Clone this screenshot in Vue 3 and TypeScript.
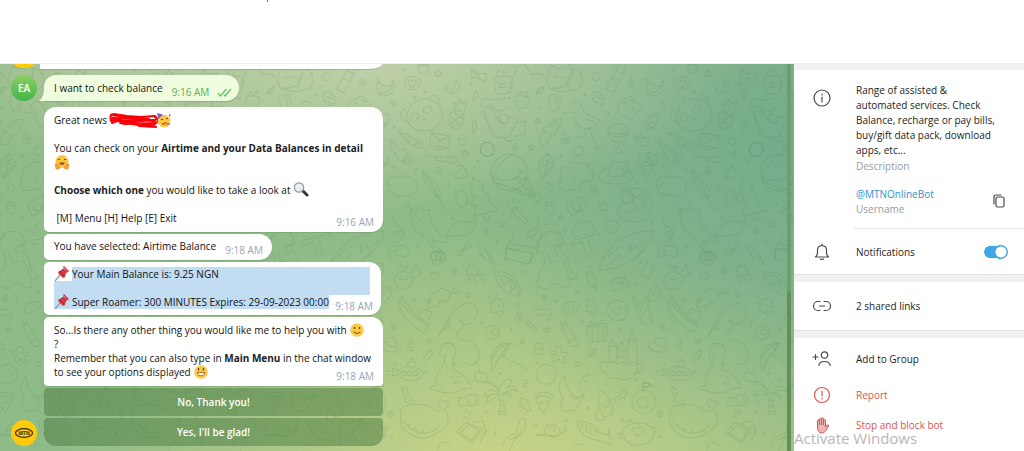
<script setup lang="ts">
import { ref } from 'vue'

const notifications = ref(true)

type Spot = [number, number, number]

const stars: Spot[] = [
  [682, 41, 12], [173, 183, 9], [154, 261, 11], [370, 440, 17], [763, 280, 10], [65, 493, 12], [242, 473, 8],
  [773, 705, 9], [202, 810, 10], [654, 843, 9], [293, 912, 10],
]
const spirals: Spot[] = [
  [457, 68, 12], [549, 130, 10], [108, 261, 12], [687, 333, 13], [343, 391, 12], [20, 515, 11], [193, 715, 10],
  [735, 635, 11], [129, 846, 9], [551, 803, 11], [542, 1063, 11], [119, 775, 16],
]
const rings: Spot[] = [
  [71, 176, 15], [22, 268, 21], [829, 268, 21], [88, 337, 54], [396, 500, 20], [38, 818, 21], [44, 817, 9],
  [198, 943, 30], [412, 751, 31], [412, 752, 12], [491, 1026, 35], [488, 1028, 16], [348, 50, 12], [466, 674, 4],
  [592, 300, 14], [591, 301, 6], [305, 785, 5], [578, 940, 7], [597, 940, 7], [616, 940, 7], [290, 440, 12],
  [478, 425, 20], [442, 412, 18],
]
const dots: Spot[] = [
  [579, 30, 3], [315, 106, 3], [386, 160, 3], [180, 145, 2], [88, 115, 3], [551, 201, 3], [611, 113, 4], [644, 95, 3],
  [781, 73, 3], [242, 288, 3], [341, 302, 2], [549, 322, 3], [616, 327, 3], [472, 365, 3], [715, 374, 3], [593, 437, 3],
  [725, 474, 3], [515, 490, 3], [200, 492, 2], [98, 523, 3], [256, 512, 3], [357, 523, 4], [620, 558, 3], [50, 545, 3],
  [801, 303, 3], [122, 335, 3], [127, 636, 4], [291, 696, 5], [112, 733, 4], [227, 724, 4], [93, 810, 3], [421, 808, 4],
  [611, 717, 3], [814, 788, 3], [731, 912, 3], [553, 913, 2], [470, 958, 3], [170, 908, 2], [59, 940, 3], [518, 977, 3],
  [646, 937, 3], [325, 1045, 3], [165, 1096, 5], [258, 1083, 4], [426, 1081, 5], [451, 1080, 2], [543, 1131, 3],
  [19, 1056, 3], [483, 607, 3], [655, 723, 5],
]

const upper: string[] = [
  // mug
  'M42 55q26-12 55-3l-8 44q-18 12-42 2zM95 62q10 2-2 24M56 48q-8-8 2-16M70 44q-6-8 4-18M52 68l22 4-20 12 24-2',
  // cat curled up
  'M202 50q6-24 16-34l14 10 22-2 14-10q12 24 2 50-20 26-60 20-14-16-8-34zM210 86q30 14 70 4 34-8 26-40-6-26-34-24M222 50q8 6 12 0m12 0q8 6 12 0M264 84q-10-24 14-44',
  // strawberry
  'M106 112q22-12 42 4-4 30-26 30-20-8-16-34zM110 110l10-16 8 10 12-12 4 20M118 122l2 3m10-3l2 3m-8 8l2 3',
  // leaf
  'M168 102q4-20 24-20-4 20-24 20m0 0l14-12',
  // penguin
  'M208 118q-4-14 14-15 20 2 18 28-2 24-20 22-18-6-10-20-6-6-2-15zM222 110q12 8 6 26',
  // flamingo
  'M249 158q16 4 34-4-2 30 10 44 30 18 62-8 12-10-2-14-24-6-40-22-8-10-10-20-16-20-32-2-2 8 2 18M313 208l4 24m10-28l24 54M290 232l22-2M340 266l30-12M345 190q-14-14-30-10',
  // bottle
  'M378 88l18-34 14-26 10-24 20 8-10 28-14 30-16 28zM396 54l22 10M408 32l24 10',
  // banana
  'M492 62q4-8 8-4 10 26 42 20l6-20q12 50-32 50-24-6-14-46M504 98q24 6 40-20',
  // pastry
  'M338 112q-4-16 8-15 12-6 16 6 14 4 12 20-6 16-20 12-16-8-16-23zM346 110l20 8m-24 4l22 10',
  // dice
  'M415 125l38-17 33 33-32 38-40-18zM430 130q10-8 6 6M456 146q12-6 6 8M452 120q10 0 12 8',
  // bubble heart
  'M582 78q-6-26 22-30 32 4 26 26-10 18-38 14zM592 68q4-14 12-4 10-10 14 2-4 12-16 18z',
  // cactus pot
  'M623 16q15-10 32 0l-4 22q-12 6-24 0zM620 16h38',
  // anchor
  'M742 56l-18 44m-18-22q2 22 18 22 18-2 22-20M706 78l-2 12m42-14l4 10M728 60l20 8',
  // bow
  'M782 30l20 12 26-2-4 26-20-10-22-4zM800 42l8 14',
  // mountain
  'M102 48l6-28 22-10 26 34 26-4 12 14M104 20h-6',
  // panda
  'M588 170q8-50 58-54 50 8 48 54-10 40-54 44-48-4-52-44zM586 146q-20 6-14 24 4 14 16 14M658 114q4-14 18-6 16 14 6 28M600 180q-2-20 14-22 16 6 8 18-10 16-22 4M638 150q2-14 18-12 12 10-2 20-14 4-16-8M634 170h8m-6 8q8 4 12-4',
  // pineapple
  'M718 160q18-18 42 0 0 36-18 48-26 0-26-24zM734 150l-6-22 14 6 4-20 8 18 16-8-8 26M722 170l32 32m-34-10l36-30m-24-6l28 24',
  // cat with toy
  'M4 140q-2-26 22-24 26 6 50-2M10 150l22 70q26 22 56 10l20-40 30-8-2 40-30 6M12 140q22-2 30 20 10 20 32 30M12 170l28 40M30 130l8 14q30 20 40-4M86 170q30 0 24 20M70 230q6 22 30 10l12-12',
  // mushroom
  'M188 206q30-26 56-28-4 32-26 52l-30-18zM196 212q-24 20-16 38 14 12 26-8l8-20M206 202q8-10 12 2M222 192q8-4 10 4',
  // cherry
  'M252 234a9 9 0 1 0 2 0M262 234a8 8 0 1 0 2 0M246 226q12-12 20 6m-12-14l-6-4',
  // burger
  'M382 216q4-22 28-26 30 0 34 26-30 12-62 0zM384 222q30 18 60 0-4 24-30 26-26-4-30-26M400 204l3 2m14-6l3 2m6 8l3 2',
  // avocado
  'M494 194q14-34 36-33 14 16-6 38-20 18-30-5zM508 194a8 8 0 1 0 8-8q-8 0-8 8',
  // crown
  'M462 226l8 30q18 4 32-2l4-26-14 8-10-18-10 16zM482 234a6 6 0 1 0 2 0',
  // candy corn and pear
  'M406 276q4-18 12-16l8 16q-10 8-20 0zM280 276q-6-12 10-14 8-10 14 0 14 20-4 26-20-2-20-12z',
  // carrot
  'M564 217l34 36q14 8 24-4-10-20-58-32zM620 246q20-4 14 16-16 8-22-8M586 236l8-6m-2 16l8-6',
  // comet
  'M538 238q20 16 30 34l8-6 16 18M538 238q0 24 18 42l-4 4q18 24 32 22',
  // envelope
  'M662 218l56 10-6 36-56-8zM662 218l26 24 30-14M672 266l18 4 16-6',
  // tube
  'M676 290l56 2q8 8 2 18l-60-10zM672 292l-20-2q-12-12-6 2M690 292l-2 12',
  // small heart
  'M744 246q-2-14 10-8 12-8 14 4-4 12-14 14zM786 186l10-4 2 24-12 14zM788 104q12-20 16-2-4 12-16 20z',
  // cake
  'M178 304l26-24 22 34-38 42q-16-20-10-52zM180 304q20 2 26-8m-20 20l34-10m-32 38l32-30M192 350l12-48',
  // balloon
  'M36 350q60 30 98-20M42 366l112 40m-70-16l70 22 14-6-30-54M94 284q-50 30-54 84M156 404l22-6 8 16-18 12zM102 360l14-10 10 12 14-12M116 362l40 44M134 360l26 42',
  // dough cloud
  'M244 386q-14-24 2-40-10-26 14-26 20-24 38-8 26-10 30 12 26 14 4 36-20 10-28 4 2 26-24 24-30 10-36-2zM268 350l4 2m14-4l4 2m-12 8q8 4 8-4',
  // drop leaf
  'M202 390q-6-22 2-24 14 14 16 22-10 10-18 2z',
  // bear in ring
  'M360 358q-8-30 30-36l10-22 14 8 20-2 6-8 2 34q20 6 14 26-28 20-70 12-20-2-26-12zM390 322q-10 20 8 28 30 6 44-18M408 326h3m14 0h3',
  // ice cream
  'M478 306q-4-26 16-24 8-8 20 0 24 2 18 28l-12 6-20 46-16-44zM486 314q24 6 42-2M488 300a10 10 0 1 0 12-12M506 290a10 10 0 1 0 14 10',
  // sheep
  'M530 380q-8-10 6-22 12-16 26-4 16-12 24 0 18-8 22 8 18 6 8 22 8 18-16 18-14 14-24 2-16 10-26-6-12 4-20-18zM526 374q20 10 22-8M554 402l-4 10m44-8l6 10',
  // umbrella closed
  'M634 328q50 40 56 76l-8 10q-46-40-48-86zM634 328l50 84 16 34q6 14 16-2M650 350l30 58',
  // bell
  'M730 346l28-26q14 16 10 30l-36 4zM738 320q10-8 20 0M732 352q12 12 32-2',
  // egg
  'M736 420q-2-26 16-30 24 12 20 36-12 22-30 10z',
  // tree
  'M786 352l34 24-8 10 24 26-4 10 30 28-70 18q-6-20 6-30l-16-4q4-18 14-26l-14-4zM814 462l12 20 12-4-10-20',
  // camera
  'M260 430l44-22 18 30-44 30q-20-14-18-38zM278 440a14 14 0 1 0 26-8',
  // acorn
  'M196 436q10-20 26 0zM198 438q-2 26 16 26 12-14 8-26M764 420l4 8',
  // flashlight
  'M90 454l16-14 16 20 24 24-8 8-26-22zM98 456l16-12M102 414v12m-14 8l-6-4m30-2l10-4',
  // dog in glasses
  'M418 400q4-14 24-12 30-10 60 8l16 34-14 40q-30 24-66 10-30-10-24-36 16-20 24-10M444 400l42 20M430 452q20 10 40-6',
  // candy stick
  'M136 534q10-30 42-30-12 26-32 28zM168 498q12-14 8-42',
  // dinosaur
  'M174 580q-2-40 14-52 8-20 40-12 24 10 20 32-10 14-24 12-4 8 10 24M240 562q14-8 12-18M232 540h2M230 556q8 2 12-4M186 520l-6 14-8 4 2 14-8 6 4 20',
  // tree and bone
  'M284 530q-14-10-4-24 4-20 24-20 24-10 30 10 16 8 10 24-8 10-22 6M276 544q4-10 14-4l14-6q20-6 22 10l10 40q-8 10-16 2l-14-40-24 8q-14 4-6-10',
  // rocket
  'M368 600q44-88 154-88-8 48-64 88M440 566l14-14-4 24 20-20 4 14 28-28M384 590q20-24 40-30',
  // kite thread and game pad
  'M550 466q-6 26 20 36 20 20 2 26-20-4-14-12 16-8 24 4-10 22-26 30M532 580q8-30 28-20 26-12 34 12 0 26-20 16-10-8-20-2-18 14-22-6zM546 574h12m-6-6v12',
  // fox
  'M600 444l14 12 18-18 10 14 14-4 4 38 30 40 24 10-6 12q-30-4-44-8l28 36-12 4-46-56-20-12q-16-20-14-68zM704 532q16-40 44-50 20 14 48-4 4 30-24 44-26 10-66 4M616 470l4 2m12-4l4 2M622 482h8',
  // shell
  'M660 590q2-20 20-16 20-4 24 12l-2 14h-38zM676 576l4 24m12-22l-2 20',
  // bone
  'M736 576q4-6 14-4l18-14q-4-8 6-10 6 10 8 12-4 6-12 4l-18 14q2 10-6 8-8-2-10-10z',
  // pencil and present
  'M804 558q16-4 24 20l10 20M804 558q-4 16 14 32M84 550l76 14-10 46M78 562l-2 38M84 550l-4 14 40 6 8-16M86 546q8-8 12 4',
]

const lower: string[] = [
  'M78-4l84 14-16 32-68-16zM-6 8l24 20 26 16-16-34',
  // dinosaur legs
  'M180 0q20 20 10 50-20 20-16 60l28 8q8-16 30-20 20 24 40 10l-6-24q14 8 28-2-30-20-30-50-4-20-24-32M204 10q4 30 26 24M244 30q20 30 20 50',
  // rocket base
  'M372 20q-20 24-12 40 80-4 126-60M380 50q30-20 40-40',
  // melon slice
  'M44 66q60-6 80 56l-10 16q-60-10-70-72zM54 74q50 6 62 54M64 86l8 20 20-20 2 38 18-20',
  // ice lolly
  'M318 72q10-14 20 0l14 28q-10 16-24 6zM340 106l10 18 4-6-8-16M322 54v-8m10 8l4-8',
  // letter
  'M388 92l46-12 14 30-48 14zM388 92l38 12 8-24M416 96l6 4 4-8',
  // duck
  'M484 68q0-14 14-12-8-18 10-16 20 6 8 24-2 20-18 18-14-4-14-14z',
  // piranha
  'M552 94q-2-24 28-30 30 8 28 30-12 26-34 24-22-4-22-24zM566 84q16 10 34-2M562 50l10-8 8 14 10-10 2 14M600 70l20-30 2 22 8 8-20 14',
  // shell
  'M660 20q0-18 20-14 24-2 24 18-4 22-22 22-22-4-22-26zM672 10l6 30m6-32l4 30m6-28l-4 26M660 78q0-14 12-8 14-6 14 6-4 10-12 16z',
  // jellyfish
  'M768 58q8-18 28-8 12 16 6 26l-30-2zM772 76l8 22m4-22l16 20m-6-22l28 20m-24-24l24 8',
  // light bulb
  'M34 182q-10-30 16-38 28 8 18 34l2 16-12 6-8-14q-12 4-16-4zM50 186l18-4M32 146l-8-6m28-4v-8m-22 30h-14M52 162l8 10',
  // lollipop handle
  'M134 218l34 24 4-6-32-26',
  // bone hook
  'M166 184q2-12 16-4 26-10 30 16 8 14-6 14-8-4-4-14-10-10-20 0-14 2-16-12z',
  // shrimp
  'M252 166q20-20 44-6 8 20-14 20l-24 14q-14-14-6-28zM262 158l6 18m10-22l2 20',
  // chick
  'M320 164q0-18 16-16 16 6 8 18l4 14q-10 10-28 4-4-12 0-20zM330 188v8m12-8v8',
  // rabbit with balloon
  'M458 138q14 0 18 32l12-2q2-28 14-24 8 14-2 32 16 10 12 28l6 14q-20 10-36-2 0-20-8-32-12-20-16-46zM480 182h3m12 0h3m-12 8q4 6 8-2M506 150q-6-38 24-40 22 20 0 40-10 10-16 0zM520 134q-2-16 10-14',
  // steam boat
  'M574 138q24 50 82 86l-16 24q-66-34-78-90zM568 154q40 50 80 70M624 190l12-14 26 10-8 28M656 178q-10-18 4-26-8-22 14-24 14-20 30-8 24 4 10 26-12 16-26 6-2 22-20 18M726 120q8-12 20 8l-22 2z',
  // fishing rod
  'M682 262q40-90 90-104 30 0 26 36-18 40-44 26-16-16-2-8 14 20-14 36 0 24 40 26 40 22 22 62-20 16-38 0M708 228q10-4 10 8-12 12-12 0M690 250l30-40',
  // crayon
  'M242 214l12 4 42 58q-2 18-20 12l-28-50zM254 218l-8 18M284 264l-18 14',
  // present
  'M320 226l60-6q4 24-4 52l-48 4q-8-22-8-50zM318 230h62M336 226v48m18-50v50m14-50v50M350 224q-14-14-20-8 4 10 20 8 8-18 22-12-2 10-22 12',
  // castle
  'M388 334v-46l10-20 14 26v40m-2-28l14-30 18 32m0 26v-46l14-46 16 50v80M412 328q12-20 20 0v18M388 288h24m0 14h30m-2-32h32M448 266h6m4 24h6M362 338q10-10 24 2 10-12 24 2 20-12 32 2 20-16 30 0 20-2 12 18-12 10-20 4-2 22-22 20-20 8-32-2-30 6-34-18-20 0-14-28z',
  // saucer
  'M502 286q8-12 22-10 4-20 24-12 16 14 8 28 12 8 6 12-40 8-60-18zM524 278q14 16 32 12M514 298l-4 8m40-4l2 6',
  // candies
  'M590 272h14v10h-12v10h14v10h-12M130 390h12v10h-12v10h14M488 398v30M490 400h18v10h-18',
  // cupcake
  'M162 296q0-14 12-18 16 4 14 18-2 24-14 16-14-4-12-16zM162 296q16 8 28-2',
  // gingerbread
  'M226 302q0-16 14-12 10 10 2 18l18-2q8 8-4 12l-8 2 8 14q-8 10-14 0l-6-8-10 12q-12-4-4-14l4-12q-18 4-14-8z',
  // planet
  'M326 308q0-12 14-10 10 10 0 20-12 0-14-10zM322 320q10-2 28-24M638 326l18-26 10 6-8 18-14 8z',
  // parasol
  'M34 322q10-44 60-44-18 18-20 40l-4-4q-20 6-30 48-8-20-6-40zM70 320l70 36-2 6M38 322q26-40 56-44M42 356q18-46 52-78',
  // submarine
  'M560 366q12-18 36-16 34 4 42 20-6 22-46 22-30-8-32-26zM590 350l2-14 20-2 4 16M600 334v-8h8M560 360l-14-6v24l14-4M540 364h-12m8 10h-10',
  // loch monster
  'M698 320q-14 2-10-16 2-26 26-24 22 4 22 24-14 30-8 56 30 8 48 40 14 4 6 14l-24 2q-40 22-74 8l-22-6q-8-14 14-10-2-20 6-40 20-20 22-54M706 290h3m14-4h3M724 382h3m14-2h3M726 396q12 8 20-2',
  // tomato
  'M792 370q10-6 18 0 20-6 20 14-6 16-22 12-20-6-16-26zM810 370l-4-12',
  // bowling holes
  'M194 368h4m8-6h4m-2 14h4',
  // palm
  'M56 428q-30-20-44 10 20-4 40-8-40 6-30 28 18-10 34-26 28-4 36 14 6-20-22-18 38-14 44 0-12-30-36-14 30-30 8-26-24 8-30 36-16-36-44-28 24 0 44 28zM54 434q12 30 2 60l24-2q-12-30-14-60M56 452h16m-14 16h16m-14 16h16',
  // fish and pizza
  'M120 444q24-2 26 24l8 12-12 6-4-8q-24-6-18-34zM166 434q30-16 54 4l-28 52q-20-24-26-56zM170 442q20-12 44 4M184 454a4 4 0 1 0 2 0m14-2a4 4 0 1 0 2 0',
  // moon on cloud
  'M254 378q-30 30-6 60l-8 30q10 24 30 12 16 10 20-10l24-34q-50 20-60-58zM272 436l14 14 26-18M296 400l14-20 18-8M300 408l6 4m4-20l10 4',
  // robot rocket
  'M356 424q24 0 32 26 16 24 8 46l-24 6-14-24zM370 460a9 9 0 1 0 12-4M396 450l28-16 4-14 8-4 4 14-8 16-6-4-26 16M354 476q-16 26 4 36 14-2 16-10',
  // flag planet
  'M492 420v-22l20 4-16 12',
  // whale
  'M572 490q-10-18 20-24 60-10 88 20 10-2 10-14-18-24 4-22 6 10 16 2 10 16-10 24 30 40-10 66-50 38-92 10-36-20-26-62zM576 512q30 36 62 38 36-2 48-24M646 518h5M594 460q-18-6-8-22-18-20-10-28 20 8 16 24M612 462q-6-18-16-10M594 524l6 14m14-4l6 14m14-8l4 12',
  // peanuts
  'M744 454q2-16 18-8 14-20 36-10 12 18-4 30l-40 2q-14-2-10-14zM770 446l8 18M790 438l4 22',
  // snail
  'M168 554l28-2q-6-26 20-30 28 4 24 30l18-8-2-16M200 552q20 20 40 0M208 544q4-22 18-10-2 14-8 8M172 552l-6 4h46q26 6 48-20',
  // fish
  'M290 514q40-6 66 32l28 10 4-22 2 50-30-12-24-4q-40-14-46-54zM304 520q8 8 0 16m16-12l-2 22m14-18l-2 26m14-18v20',
  // pig balloon
  'M426 552q4-32 54-34 46 6 40 38-8 30-52 30-32-4-42-34zM456 540q4-14 14-4 12-12 20 2-6 16-18 20zM426 548l-14 4 12 14M516 530l12 4-6 24M446 522l-2-10 16 4',
  // popcorn boxes
  'M738 546l28-30 46 22-28 42zM748 548l26-24 30 18-22 30zM786 518l30-6 12 32-18 10M758 508l6-10 8 10m4-12l6-12m-18-6l6 12',
  // surf boards
  'M66 590q4-30 42-40l12-42q20-10 18 20-6 24-30 34l-20 38M88 570q24-10 36-26M48 514v12m-2 18v14M0 530l20 16-20 30M276 596q8-18 30-12M680 600q6-40 38-14',
]

const starPath = (x: number, y: number, r: number): string =>
  Array.from({ length: 10 }, (_, i) => {
    const a = -Math.PI / 2 + (i * Math.PI) / 5
    const d = i % 2 ? r * 0.5 : r
    return `${i ? 'L' : 'M'}${(x + d * Math.cos(a)).toFixed(1)} ${(y + d * Math.sin(a)).toFixed(1)}`
  }).join('') + 'z'

const spiralPath = (x: number, y: number, r: number): string =>
  Array.from({ length: 26 }, (_, i) => {
    const a = i * 0.45
    const d = (r * i) / 25
    return `${i ? 'L' : 'M'}${(x + d * Math.cos(a)).toFixed(1)} ${(y + d * Math.sin(a)).toFixed(1)}`
  }).join('')
</script>

<template>
  <div class="page">
    <header class="blank"><i class="speck"></i></header>
    <div class="body">
      <main class="chat">
        <svg class="wallpaper" aria-hidden="true">
          <defs>
            <pattern id="doodles" width="808" height="1200" patternUnits="userSpaceOnUse" patternTransform="translate(480 -4) scale(.33333)">
              <g v-for="dx in [0, -808]" :key="dx" :transform="`translate(${dx} 0)`" fill="none" stroke="#437843" stroke-opacity=".17" stroke-width="3" stroke-linejoin="round" stroke-linecap="round">
                <path v-for="(s, i) in stars" :key="'s' + i" :d="starPath(...s)" />
                <path v-for="(s, i) in spirals" :key="'p' + i" :d="spiralPath(...s)" />
                <circle v-for="(s, i) in rings" :key="'r' + i" :cx="s[0]" :cy="s[1]" :r="s[2]" />
                <circle v-for="(s, i) in dots" :key="'d' + i" :cx="s[0]" :cy="s[1]" :r="s[2]" />
                <path v-for="(d, i) in upper" :key="'u' + i" :d="d" />
                <path v-for="(d, i) in lower" :key="'l' + i" :d="d" transform="translate(0 570)" />
              </g>
            </pattern>
          </defs>
          <rect width="100%" height="100%" fill="url(#doodles)" />
        </svg>

        <div class="thread">
          <div class="row first">
            <span class="avatar mtn-cut"></span>
            <div class="bubble cut"></div>
          </div>

          <div class="row own">
            <span class="avatar ea">EA</span>
            <div class="bubble sent">
              <svg class="tail" viewBox="0 0 8 12" aria-hidden="true"><path d="M8 0v12H0q5-4 5-12z" fill="#effdde" /></svg>
              <p>I want to check balance</p>
              <span class="time">9:16 AM
                <svg class="ticks" viewBox="0 0 15 9" aria-hidden="true"><path d="M1 5l2.500 3L9.500 1M7 7l1 1 6-7" fill="none" stroke="#5fbf62" stroke-width="1.200" /></svg>
              </span>
            </div>
          </div>

          <div class="row">
            <span class="avatar mtn"><svg viewBox="0 0 26 26" aria-hidden="true"><ellipse cx="13" cy="13" rx="8.500" ry="4.300" fill="none" stroke="#2a2a18" stroke-width="1.200" /><text x="13" y="15" text-anchor="middle">MTN</text></svg></span>
            <div class="stack">
              <div class="bubble over wide top">
                <p>
                  Great news <svg class="scribble" viewBox="0 0 50 16" aria-hidden="true"><path d="M2 3l7 1 31 3-37-1 3 3 39-1-34 3 5 1 30-1-16 3 17 1" fill="none" stroke="#fa0008" stroke-width="2" stroke-linecap="round" stroke-linejoin="round" /><path d="M2 9q-2-7 3-7l13 2 14 1 14-1q4 3-2 5l-22-3M3 11q10-5 20 1l12 2 10-1q7-5 1-8M2 9l14-3 30 3" fill="none" stroke="#fa0008" stroke-width="2" stroke-linecap="round" stroke-linejoin="round" /></svg><svg class="emoji party" viewBox="0 0 16 16" aria-label="party face"><circle cx="8" cy="9" r="6.300" fill="#fdc83c" /><path d="M1 1l6 1.500L2.500 7z" fill="#7960bb" /><path d="M13 2l2 1-2 2" fill="#7960bb" /><path d="M5 8q1-2 2 0m3-1q1-2 2 0M6 12q3 1 4-2" fill="none" stroke="#6b4218" /><path d="M10 11l4 1-3 1z" fill="#e5785f" stroke="#dc795d" /></svg><br /><br />
                  You can check on your <b>Airtime and your Data Balances in detail</b><br />
                  <svg class="emoji" viewBox="0 0 16 16" aria-label="hugging face"><circle cx="8" cy="7.500" r="6.500" fill="#fdc442" /><path d="M4 6q1-2 2 0m4 0q1-2 2 0" fill="none" stroke="#7a4515" /><path d="M5 8.500h6q-1 2.500-3 2.500T5 8.500" fill="#a44c20" /><path d="M1 10q2-1 5 3l-1 2H2zM15 10q-2-1-5 3l1 2h3z" fill="#f4a23a" stroke="#e48a2b" stroke-width=".6" /></svg><br /><br />
                  <b>Choose which one</b> you would like to take a look at <svg class="emoji" viewBox="0 0 16 16" aria-label="magnifier"><path d="M10 9l4 4" stroke="#30353a" stroke-width="3" stroke-linecap="round" /><circle cx="6" cy="5.500" r="4.700" fill="#e6edf0" stroke="#92999c" stroke-width="1.200" /><path d="M4 5q1-2 3-2" fill="none" stroke="#fff" /></svg><br /><br />
                  &nbsp;[M] Menu [H] Help [E] Exit
                </p>
                <span class="time">9:16 AM</span>
              </div>

              <div class="bubble short">
                <p>You have selected: Airtime Balance</p>
                <span class="time">9:18 AM</span>
              </div>

              <div class="bubble over balance">
                <div class="picked">
                  <div class="mark first-mark"><span class="plain"><svg class="emoji" viewBox="0 0 16 16" aria-label="pin"><path d="M1 15l6-7" stroke="#8c9aa4" stroke-width="1.200" /><path d="M9 2l5 4-2 1-1 4-2 1-5-5 1-2 4-1zM9 1l1-1 5 5-1 1z" fill="#d9363e" /><path d="M9 3L6 6l4 4" fill="none" stroke="#a91f31" /></svg></span>Your Main Balance is: 9.25 NGN</div>
                  <div class="mark"></div>
                  <div class="mark last-mark"><svg class="emoji" viewBox="0 0 16 16" aria-label="pin"><path d="M1 15l6-7" stroke="#8c9aa4" stroke-width="1.200" /><path d="M9 2l5 4-2 1-1 4-2 1-5-5 1-2 4-1zM9 1l1-1 5 5-1 1z" fill="#d9363e" /><path d="M9 3L6 6l4 4" fill="none" stroke="#a91f31" /></svg><span>Super Roamer: 300 MINUTES Expires: 29-09-2023 00:00</span></div>
                </div>
                <span class="time">9:18 AM</span>
              </div>

              <div class="bubble over wide last">
                <p>
                  So...Is there any other thing you would like me to help you with <svg class="emoji" viewBox="0 0 16 16" aria-label="slight smile"><circle cx="8" cy="8" r="6.800" fill="#fdca45" /><path d="M5.500 5v2m5-2v2" stroke="#65431b" stroke-width="1.300" /><path d="M4.500 10q3.500 3 7 0" fill="none" stroke="#7a4a17" /></svg><br />
                  ?<br />
                  Remember that you can also type in <b>Main Menu</b> in the chat window<br />
                  to see your options displayed <svg class="emoji" viewBox="0 0 16 16" aria-label="grin"><circle cx="8" cy="8" r="6.800" fill="#fdca45" /><path d="M5.500 4v2.500m5-2.500v2.500" stroke="#65431b" stroke-width="1.300" /><path d="M4 8.500h8q-1 3.500-4 3.500T4 8.500" fill="#fff3d0" stroke="#946025" stroke-width=".8" /></svg>
                </p>
                <span class="time">9:18 AM</span>
              </div>

              <button class="reply" type="button">No, Thank you!</button>
              <button class="reply end" type="button">Yes, I'll be glad!</button>
            </div>
          </div>
        </div>
        <div class="track"><i class="thumb"></i></div>
      </main>

      <aside class="side">
        <section class="card about">
          <div class="item info">
            <svg class="icon" viewBox="0 0 20 20" aria-hidden="true"><circle cx="10" cy="10" r="8" /><path d="M10 9v5M10 6v1" /></svg>
            <div class="copy">
              <p class="desc">Range of assisted &amp;<br />automated services. Check<br />Balance, recharge or pay bills,<br />buy/gift data pack, download<br />apps, etc...</p>
              <small>Description</small>
            </div>
          </div>
          <div class="item user">
            <div class="copy">
              <a href="#">@MTNOnlineBot</a>
              <small>Username</small>
            </div>
            <button class="plain-btn" type="button" aria-label="Copy username">
              <svg class="icon small" viewBox="0 0 14 16" aria-hidden="true"><rect x="4" y="4" width="8" height="10" rx="1.500" /><path d="M2 11V4q0-2 2-2h5" /></svg>
            </button>
          </div>
          <label class="item notify">
            <svg class="icon" viewBox="0 0 20 20" aria-hidden="true"><path d="M3.500 15q2-2 2-4V8q0-4 4.500-4.500Q14.500 4 14.500 8v3q0 2 2 4zM10 3V2M8.500 17q1.500 1 3 0" /></svg>
            <span>Notifications</span>
            <input v-model="notifications" type="checkbox" class="switch" />
          </label>
        </section>

        <section class="card links">
          <button class="item" type="button">
            <svg class="icon" viewBox="0 0 20 20" aria-hidden="true"><path d="M8 5.500H6a4.500 4.500 0 0 0 0 9h2M12 5.500h2a4.500 4.500 0 0 1 0 9h-2M7.500 10h5" /></svg>
            <span>2 shared links</span>
          </button>
        </section>

        <section class="card actions">
          <button class="item add" type="button">
            <svg class="icon" viewBox="0 0 20 20" aria-hidden="true"><circle cx="12.500" cy="6" r="3.200" /><path d="M7 16.500v-1q1-3 5.500-3t5.500 3v1M1 8h5M3.500 5.500v5" /></svg>
            <span>Add to Group</span>
          </button>
          <button class="item danger" type="button">
            <svg class="icon" viewBox="0 0 20 20" aria-hidden="true"><circle cx="10" cy="10" r="7.500" /><path d="M10 6v5M10 13v1" /></svg>
            <span>Report</span>
          </button>
          <button class="item danger" type="button">
            <svg class="icon hand" viewBox="0 0 20 20" aria-hidden="true"><path d="M5.500 12V5.500q1-1.500 2 0V10V4q1-1.500 2 0v6V3.500q1.200-1.500 2 0V10V5q1.200-1.300 2 0v7l1.500-2q1.500-.5 1.500 1l-3 5q-1.500 2-4 2-4 0-4-6z" fill="#f0b4b2" /></svg>
            <span>Stop and block bot</span>
          </button>
        </section>
        <div class="activate">Activate Windows</div>
      </aside>
    </div>
  </div>
</template>

<style>
body {
  margin: 0;
  background: #fff;
}
</style>

<style scoped>
.page {
  min-height: 100vh;
  display: flex;
  flex-direction: column;
  overflow: hidden;
  font: 10px/14px "Open Sans", "Noto Sans", sans-serif;
  color: #111;
}
.blank {
  height: 63px;
  border-bottom: 1px solid #eee;
  display: flex;
}
.speck {
  width: 1px;
  height: 2px;
  margin-left: 267px;
  background: #8f6f80;
}
.body {
  flex: 1;
  display: flex;
}
.chat {
  flex: 1;
  position: relative;
  overflow: hidden;
  background:
    radial-gradient(ellipse 48% 38% at 46% 0, #c4d1abee, #c4d1ab00),
    radial-gradient(ellipse 46% 80% at 100% 22%, #74ab8cff, #74ab8c00),
    radial-gradient(ellipse 56% 62% at 63% 104%, #c9d487ff, #c9d48700),
    radial-gradient(ellipse 30% 26% at 12% 0, #bccca388, #bccca300),
    #8fbb88;
}
.wallpaper {
  position: absolute;
  inset: 0;
  width: 100%;
  height: 100%;
}
.thread {
  position: relative;
  padding: 0 28px 5px 11px;
  display: flex;
  flex-direction: column;
  gap: 6px;
}
.row {
  display: flex;
  align-items: flex-end;
  gap: 7px;
}
.first {
  height: 5px;
  align-items: stretch;
}
.avatar {
  width: 26px;
  height: 26px;
  border-radius: 50%;
  flex: none;
  display: block;
}
.mtn-cut {
  height: 4px;
  width: 20px;
  margin: 0 3px;
  border-radius: 0 0 10px 10px / 0 0 4px 4px;
  background: #ffc90c;
}
.mtn {
  background: #ffc90c;
}
.mtn svg {
  display: block;
}
.mtn text {
  font: 700 5px "Open Sans", sans-serif;
  fill: #2a2a18;
}
.ea {
  background: linear-gradient(#8ccf63, #41b649);
  color: #fff;
  font-weight: 600;
  line-height: 26px;
  text-align: center;
}
.bubble {
  background: #fff;
  box-shadow: 0 1px 0 #6d9a6a77;
  box-sizing: border-box;
  white-space: nowrap;
}
.bubble p {
  margin: 0;
}
.cut {
  width: 342px;
  margin-left: -4px;
  border-radius: 0 0 12px 0 / 0 0 5px 0;
}
.sent {
  position: relative;
  display: flex;
  gap: 9px;
  padding: 6px 7px 6px 10px;
  background: #effdde;
  border-radius: 12px 13px 13px 0;
}
.tail {
  position: absolute;
  left: -5px;
  bottom: 0;
  width: 8px;
  height: 12px;
}
.stack {
  display: flex;
  flex-direction: column;
  align-items: flex-start;
  gap: 2px;
  width: 339px;
}
.time {
  align-self: end;
  justify-self: end;
  color: #98a5b0;
  margin-bottom: -4px;
}
.sent .time {
  color: #62ac55;
}
.ticks {
  width: 15px;
  height: 9px;
  margin-left: 5px;
  vertical-align: -1px;
}
.over {
  display: grid;
  padding: 6px 9px 7px 10px;
}
.over > * {
  grid-area: 1 / 1;
}
.wide {
  width: 100%;
}
.top {
  border-radius: 12px 12px 12px 5px;
}
.short {
  display: flex;
  gap: 9px;
  padding: 5px 9px 7px 10px;
  border-radius: 5px 13px 13px 5px;
}
.balance {
  width: 337px;
  padding: 5px 8px 6px 10px;
  border-radius: 5px 12px 12px 5px;
}
.last {
  border-radius: 5px 12px 4px 4px;
}
.picked {
  margin-right: 3px;
}
.mark {
  height: 14px;
  background: #c2dcf2;
}
.plain {
  display: inline-block;
  height: 14px;
  vertical-align: top;
  background: #fff;
}
.last-mark {
  width: max-content;
}
.emoji {
  width: 16px;
  height: 16px;
  margin: -3px 1px -3px 0;
  vertical-align: -1px;
}
.party {
  margin-left: -3px;
}
.balance .emoji {
  margin-right: 2px;
}
.scribble {
  width: 50px;
  height: 16px;
  margin: -3px 0 -3px -1px;
  vertical-align: -1px;
}
b {
  font-weight: 700;
  color: #222;
}
.reply {
  width: 100%;
  height: 28px;
  padding: 0;
  border: 0;
  border-radius: 4px;
  background: #50804588;
  color: #fff;
  font: 600 10px/28px "Open Sans", sans-serif;
}
.end {
  border-radius: 4px 4px 12px 12px;
}
.track {
  position: absolute;
  inset: 0 3px 0 auto;
  width: 4px;
  background: #6d9f6c;
  display: flex;
  align-items: flex-end;
}
.thumb {
  width: 4px;
  height: 41%;
  background: #639056;
}
.side {
  position: relative;
  width: 230px;
  flex: none;
  display: flex;
  flex-direction: column;
  gap: 7px;
  padding-top: 6px;
  box-sizing: border-box;
  background: #f0f0f0;
  color: #1c1c1c;
}
.card {
  background: #fff;
  border-bottom: 1px solid #e2e2e2;
}
.item {
  width: 100%;
  box-sizing: border-box;
  display: flex;
  align-items: center;
  gap: 24px;
  padding: 0 16px 0 18px;
  border: 0;
  background: none;
  color: inherit;
  font: inherit;
  text-align: left;
}
.icon {
  width: 20px;
  height: 20px;
  flex: none;
  fill: none;
  stroke: #4b4b4b;
  stroke-width: 1.200;
  stroke-linecap: round;
  stroke-linejoin: round;
}
.info {
  align-items: flex-start;
  padding-top: 13px;
}
.info .icon {
  margin-top: 5px;
}
.copy {
  display: flex;
  flex-direction: column;
}
.desc {
  margin: 0 0 1px;
  line-height: 15px;
}
small {
  font-size: 10px;
  line-height: 14px;
  color: #999;
}
.user {
  padding: 13px 18px 12px 62px;
  justify-content: space-between;
}
.user a {
  color: #2f91d0;
  text-decoration: none;
  line-height: 16px;
}
.plain-btn {
  padding: 0;
  border: 0;
  background: none;
  display: flex;
}
.small {
  width: 14px;
  height: 16px;
}
.notify {
  position: relative;
  height: 46px;
  padding-top: 2px;
}
.notify::before {
  content: "";
  position: absolute;
  inset: 0 0 auto 60px;
  height: 1px;
  background: #e6e6e6;
}
.switch {
  appearance: none;
  margin: 0 0 0 auto;
  width: 24px;
  height: 14px;
  border-radius: 7px;
  background: radial-gradient(circle at 17px 7px, #fff 5px, #40a7e3 6px, #40a7e3 7px, transparent 7px), linear-gradient(#40a7e3, #40a7e3) 6px 1px / 10px 12px no-repeat, radial-gradient(circle at 6px 7px, #40a7e3 6px, transparent 6px);
}
.switch:not(:checked) {
  filter: grayscale(1);
}
.links .item {
  height: 48px;
}
.actions {
  flex: 1;
  border: 0;
}
.actions .item {
  height: 30px;
}
.actions .add {
  height: 42px;
}
.danger {
  color: #d9534f;
}
.danger .icon {
  stroke: #d9534f;
}
.danger .hand {
  stroke-width: 1;
}
.activate {
  position: absolute;
  left: 0;
  bottom: 5px;
  font-size: 15px;
  line-height: 16px;
  color: #b7b7b7;
  pointer-events: none;
}
</style>
